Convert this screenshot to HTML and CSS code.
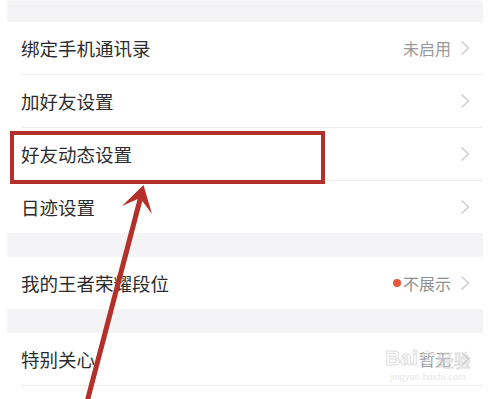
FILE: index.html
```html
<!DOCTYPE html>
<html lang="zh-CN">
<head>
<meta charset="utf-8">
<title>设置</title>
<link rel="stylesheet" href="styles.css">
</head>
<body>
<div class="page">
  <div class="screen">
    <div class="band band-top"></div>
    <div class="group">
      <div class="row"><div class="row-inner"><span class="label">绑定手机通讯录</span><span class="value">未启用</span><svg class="chev" viewBox="0 0 10 16"><polyline points="1.5,1.5 8.5,8 1.5,14.5"/></svg></div></div>
      <div class="row"><div class="row-inner"><span class="label">加好友设置</span><svg class="chev" viewBox="0 0 10 16"><polyline points="1.5,1.5 8.5,8 1.5,14.5"/></svg></div></div>
      <div class="row"><div class="row-inner"><span class="label">好友动态设置</span><svg class="chev" viewBox="0 0 10 16"><polyline points="1.5,1.5 8.5,8 1.5,14.5"/></svg></div></div>
      <div class="row row-last"><div class="row-inner"><span class="label">日迹设置</span><svg class="chev" viewBox="0 0 10 16"><polyline points="1.5,1.5 8.5,8 1.5,14.5"/></svg></div></div>
    </div>
    <div class="band"></div>
    <div class="group">
      <div class="row row-last"><div class="row-inner"><span class="label">我的王者荣耀段位</span><span class="dot"></span><span class="value value-tight">不展示</span><svg class="chev" viewBox="0 0 10 16"><polyline points="1.5,1.5 8.5,8 1.5,14.5"/></svg></div></div>
    </div>
    <div class="band"></div>
    <div class="group">
      <div class="row"><div class="row-inner"><span class="label">特别关心</span><span class="value">暂无</span><svg class="chev" viewBox="0 0 10 16"><polyline points="1.5,1.5 8.5,8 1.5,14.5"/></svg></div></div>
    </div>
  </div>

  <div class="highlight"></div>

  <svg class="arrow" viewBox="0 0 500 399">
    <line x1="87" y1="402" x2="141" y2="196"/>
    <polygon points="143.5,185 122,206 140,198 152,214"/>
  </svg>

  <div class="watermark">
    <div class="wm-logo"><span class="wm-bai">Bai</span><svg class="wm-paw" viewBox="0 0 20 20"><circle cx="5" cy="6" r="2.2"/><circle cx="10" cy="3.5" r="2.2"/><circle cx="15" cy="6" r="2.2"/><path d="M4 15 Q10 7 16 15 Q10 19 4 15 Z"/></svg><span class="wm-jy">经验</span></div>
    <div class="wm-url">jingyan.baidu.com</div>
  </div>
</div>
</body>
</html>
```

FILE: styles.css
```css
html, body {
  margin: 0;
  padding: 0;
  background: #ffffff;
}

body {
  font-family: "Noto Sans CJK SC", "Noto Sans", sans-serif;
  color: #2c2c2c;
}

.page {
  position: relative;
  width: 500px;
  height: 399px;
  overflow: hidden;
  background: #ffffff;
}

.screen {
  margin-left: 7px;
  width: 476px;
  display: flex;
  flex-direction: column;
}

.band {
  height: 24px;
  background: #f4f4f6;
}

.band-top {
  height: 22px;
  border-top: 1px solid #fafafa;
  box-sizing: border-box;
}

.group {
  background: #ffffff;
  display: flex;
  flex-direction: column;
}

.row {
  padding-left: 14px;
}

.row-inner {
  height: 52px;
  border-bottom: 1px solid #ededed;
  display: flex;
  align-items: center;
  padding-right: 13px;
}

.row-last .row-inner {
  border-bottom: none;
}

.label {
  flex: 1;
  font-size: 18.5px;
  line-height: 1;
  color: #2c2c2c;
}

.value {
  font-size: 16px;
  line-height: 1;
  color: #999999;
  margin-right: 9px;
}

.value-tight {
  color: #8f8f8f;
}

.dot {
  width: 8px;
  height: 8px;
  border-radius: 50%;
  background: #e9553f;
  margin-right: 2px;
}

.chev {
  width: 10px;
  height: 16px;
  fill: none;
  stroke: #c9c9cd;
  stroke-width: 1.3;
}

.highlight {
  position: absolute;
  left: 10px;
  top: 131px;
  width: 315px;
  height: 53px;
  box-sizing: border-box;
  border: 4px solid #b3302b;
}

.arrow {
  position: absolute;
  left: 0;
  top: 0;
  width: 500px;
  height: 399px;
}

.arrow line {
  stroke: #b3302b;
  stroke-width: 5;
}

.arrow polygon {
  fill: #b3302b;
}

.watermark {
  position: absolute;
  left: 382px;
  top: 347px;
  width: 92px;
  display: flex;
  flex-direction: column;
  align-items: center;
  opacity: 0.75;
}

.wm-logo {
  display: flex;
  align-items: flex-end;
}

.wm-bai {
  font-family: "Liberation Sans", sans-serif;
  font-weight: bold;
  font-size: 21px;
  line-height: 1;
  color: rgba(255, 255, 255, 0.6);
  -webkit-text-stroke: 1px #d6d6d6;
}

.wm-paw {
  width: 17px;
  height: 17px;
  fill: rgba(255, 255, 255, 0.5);
  stroke: #d6d6d6;
  stroke-width: 1;
  margin: 0 1px 1px;
}

.wm-jy {
  font-size: 17px;
  line-height: 1;
  color: rgba(255, 255, 255, 0.6);
  -webkit-text-stroke: 0.8px #d3d3d3;
}

.wm-url {
  font-family: "Liberation Sans", sans-serif;
  font-size: 9px;
  line-height: 1;
  margin-top: 5px;
  color: #dedede;
  letter-spacing: 0.2px;
}
```
